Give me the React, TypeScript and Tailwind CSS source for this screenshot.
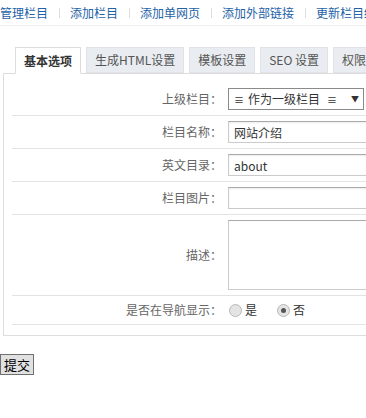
import React from 'react';

const navLinks = ['管理栏目', '添加栏目', '添加单网页', '添加外部链接', '更新栏目缓存'];
const tabs = ['基本选项', '生成HTML设置', '模板设置', 'SEO 设置', '权限设置'];

function Row({ label, children }: { label: string; children: React.ReactNode }) {
    return (
        <div className="flex items-start border-b border-[#e3e3e3] py-[5px]">
            <div className="w-[216px] shrink-0 pr-[6px] text-right text-[#666] self-center">{label}</div>
            <div className="flex items-center">{children}</div>
        </div>
    );
}

function Radio({ checked, label }: { checked?: boolean; label: string }) {
    return (
        <label className="flex items-center mr-[20px] text-[#333]">
            <span className="w-[13px] h-[13px] rounded-full border border-[#b8b8b8] bg-[#e4e4e4] flex items-center justify-center mr-[3px]">
                {checked && <span className="w-[5px] h-[5px] rounded-full bg-[#555]" />}
            </span>
            {label}
        </label>
    );
}

export default function App() {
    const input = 'h-[22px] w-[320px] border border-[#cbcbcb] border-t-[#a9a9a9] px-[5px] text-[#333] text-[12px] outline-none shadow-[inset_0_1px_2px_rgba(0,0,0,0.08)]';

    return (
        <div className="w-[366px] h-[418px] overflow-hidden bg-white font-['Noto_Sans_CJK_SC',sans-serif] text-[12px]">
            <div className="w-[640px]">
                <div className="flex items-center h-[26px] border-b border-[#eeeeee]">
                    {navLinks.map((l, i) => (
                        <div key={l} className="flex items-center">
                            {i > 0 && <span className="w-px h-[10px] bg-[#dddddd] ml-[11px] mr-[10px]" />}
                            <a className="text-[#2462a8]">{l}</a>
                        </div>
                    ))}
                </div>

                <div className="flex gap-[5px] pl-[15px] mt-[21px]">
                    {tabs.map((t, i) =>
                        i === 0 ? (
                            <div key={t} className="h-[27px] px-[8px] flex items-center border border-[#dcdcdc] border-b-white bg-white font-bold text-[#333] relative z-10 -mb-px">
                                {t}
                            </div>
                        ) : (
                            <div key={t} className="h-[26px] px-[8px] flex items-center border border-[#dfe3e8] bg-[#e9ecf0] text-[#555]">
                                {t}
                            </div>
                        )
                    )}
                </div>

                <div className="ml-[3px] border border-[#dddddd] px-[8px] pt-[9px] pb-[10px]">
                    <Row label="上级栏目：">
                        <div className="h-[22px] w-[136px] border border-[#8a8a8a] flex items-center pl-[5px] pr-[4px] text-[#333]">
                            <span className="text-[10px] mr-[4px]">≡</span>
                            <span>作为一级栏目</span>
                            <span className="text-[10px] ml-[7px]">≡</span>
                            <span className="ml-auto text-[8px]">▼</span>
                        </div>
                    </Row>
                    <Row label="栏目名称：">
                        <input readOnly defaultValue="网站介绍" className={input} />
                    </Row>
                    <Row label="英文目录：">
                        <input readOnly defaultValue="about" className={input} />
                    </Row>
                    <Row label="栏目图片：">
                        <input readOnly defaultValue="" className={input} />
                    </Row>
                    <Row label="描述：">
                        <textarea readOnly className="h-[70px] w-[320px] border border-[#cbcbcb] border-t-[#a9a9a9] resize-none outline-none block" />
                    </Row>
                    <div className="flex items-center border-b border-[#e3e3e3] py-[5px]">
                        <div className="w-[216px] shrink-0 pr-[6px] text-right text-[#666]">是否在导航显示：</div>
                        <div className="flex items-center h-[16px] pl-[1px]">
                            <Radio label="是" />
                            <Radio checked label="否" />
                        </div>
                    </div>
                </div>

                <button className="mt-[18px] h-[21px] px-[3px] border border-[#707070] bg-[#e1e1e1] text-[13px] text-black leading-none">
                    提交
                </button>
            </div>
        </div>
    );
}
